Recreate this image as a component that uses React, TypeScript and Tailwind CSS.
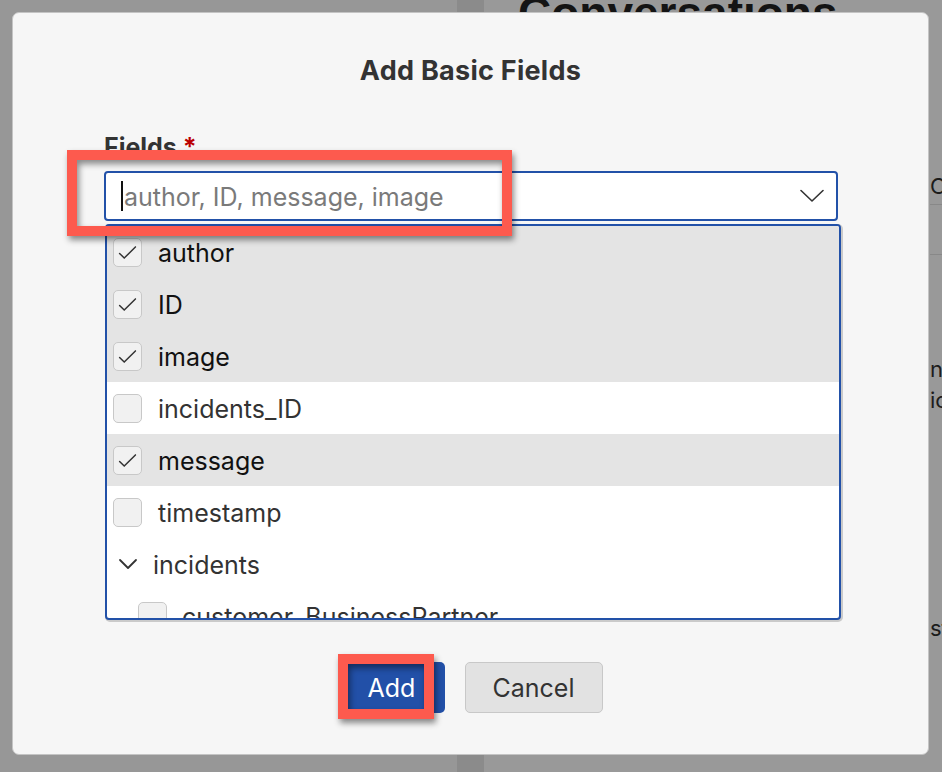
import React from "react";

const fields = [
  { name: "author", checked: true },
  { name: "ID", checked: true },
  { name: "image", checked: true },
  { name: "incidents_ID", checked: false },
  { name: "message", checked: true },
  { name: "timestamp", checked: false },
];

function Check() {
  return (
    <svg width="29" height="29" viewBox="0 0 29 29" fill="none">
      <path d="M6 15.5 L11 20.5 L23 8.5" stroke="#333" strokeWidth="1.6" strokeLinecap="round" strokeLinejoin="round" />
    </svg>
  );
}

function Box({ checked }: { checked: boolean }) {
  return (
    <div className="w-[29px] h-[29px] shrink-0 rounded-[5px] border-[1.5px] border-[#c8c8c8] bg-[#f1f1f1] flex items-center justify-center">
      {checked && <Check />}
    </div>
  );
}

export default function App() {
  return (
    <div
      className="relative w-[942px] h-[772px] overflow-hidden bg-[#969696]"
      style={{ fontFamily: "Inter, 'Noto Sans', sans-serif" }}
    >
      {/* page behind the dialog */}
      <div className="flex h-full">
        <div className="w-[457px] shrink-0 bg-[#979797]" />
        <div className="w-[27px] shrink-0 bg-[#8b8b8b]" />
        <div className="flex-1 min-w-0 bg-[#999999] whitespace-nowrap">
          <h2
            className="ml-[34px] mt-[-10px] text-[46px] leading-[46px] font-bold text-[#141414]"
            style={{ fontFamily: "'Liberation Sans', Arial, sans-serif" }}
          >
            Conversations
          </h2>
          <div className="ml-[446px] mt-[134px] text-[22px] text-[#1c1c1c]">
            <div className="h-[32px] leading-[32px]">Customer</div>
            <div className="border-t border-[#888] mt-[2px] h-[50px]" />
            <div className="border-t border-[#888]" />
            <div className="mt-[98px] leading-[32px]">name</div>
            <div className="leading-[30px]">icon</div>
            <div className="mt-[198px] leading-[30px]">status</div>
          </div>
        </div>
      </div>

      {/* dialog */}
      <div className="absolute left-[12px] top-[12px] w-[917px] h-[743px] rounded-[7px] border border-[#c4c4c4] bg-[#f6f6f6] flex flex-col items-center">
        <h1 className="mt-[43px] h-[30px] leading-[30px] text-[27px] tracking-[0.01em] font-bold text-[#333]">
          Add Basic Fields
        </h1>

        <div className="self-start ml-[91px] mt-[48px] w-[737px]">
          <label className="block h-[26px] leading-[26px] text-[25px] font-bold text-[#333]">
            Fields <span className="text-[#bb0000]">*</span>
          </label>

          <div className="mt-[11px] w-[734px] h-[50px] rounded-[4px] border-2 border-[#2251a8] bg-white flex items-center pl-[15px] pr-[12px]">
            <span className="w-[2px] h-[30px] bg-[#111]" />
            <span className="ml-[1px] flex-1 pt-[3px] text-[25px] text-[#7a7a7a]">author, ID, message, image</span>
            <svg width="24" height="14" viewBox="0 0 24 14" fill="none">
              <path d="M1 1.5 L12 12 L23 1.5" stroke="#333" strokeWidth="1.6" strokeLinecap="round" strokeLinejoin="round" />
            </svg>
          </div>

          <div className="mt-[3px] ml-px w-[736px] h-[396px] rounded-[4px] border-2 border-[#2251a8] bg-white overflow-hidden shadow-[1px_1px_0_1px_#cacaca]">
            {fields.map((f) => (
              <div
                key={f.name}
                className={`h-[52px] flex items-center pl-[6px] ${f.checked ? "bg-[#e4e4e4]" : "bg-white"}`}
              >
                <Box checked={f.checked} />
                <span className={`ml-[16px] pt-[3px] text-[25px] ${f.checked ? "text-[#111]" : "text-[#333]"}`}>
                  {f.name}
                </span>
              </div>
            ))}
            <div className="h-[52px] flex items-center pl-[11px]">
              <svg width="20" height="12" viewBox="0 0 20 12" fill="none">
                <path d="M2 2 L10 10 L18 2" stroke="#333" strokeWidth="1.8" strokeLinecap="round" strokeLinejoin="round" />
              </svg>
              <span className="ml-[15px] pt-[3px] text-[25px] text-[#333]">incidents</span>
            </div>
            <div className="h-[52px] flex items-center pl-[31px]">
              <Box checked={false} />
              <span className="ml-[15px] pt-[3px] text-[25px] text-[#333]">customer_BusinessPartner</span>
            </div>
          </div>
        </div>

        <div className="mt-[42px] flex gap-[20px]">
          <button className="w-[106px] h-[51px] pt-[3px] rounded-[5px] bg-[#2250a8] text-white text-[25px]">Add</button>
          <button className="w-[138px] h-[51px] pt-[3px] rounded-[5px] border-[1.5px] border-[#c8c8c8] bg-[#e2e2e2] text-[#333] text-[25px]">
            Cancel
          </button>
        </div>
      </div>

      {/* annotation frames */}
      <div className="absolute left-[67px] top-[150px] w-[445px] h-[86px] border-[10px] border-[#fd5a4e] shadow-[2px_4px_6px_rgba(0,0,0,0.45),inset_2px_4px_6px_rgba(0,0,0,0.45)]" />
      <div className="absolute left-[338px] top-[654px] w-[96px] h-[65px] border-[10px] border-[#fd5a4e] shadow-[2px_4px_6px_rgba(0,0,0,0.45),inset_2px_4px_6px_rgba(0,0,0,0.45)]" />
    </div>
  );
}
